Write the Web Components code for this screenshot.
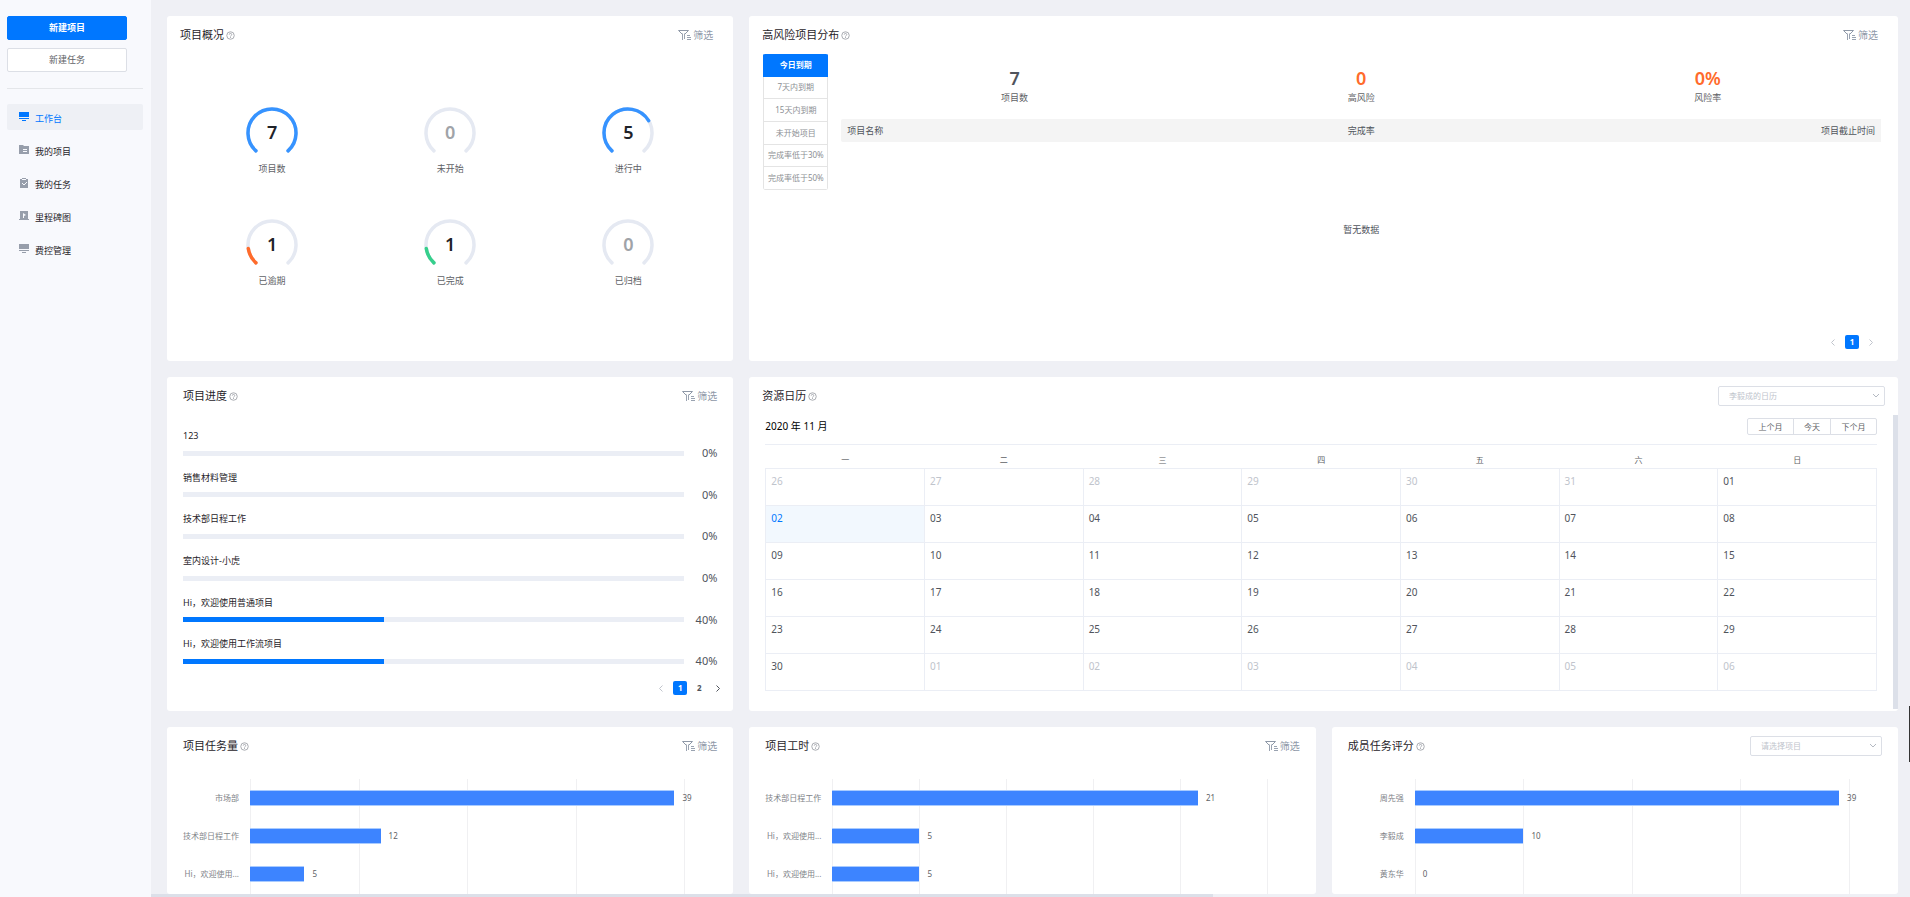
<!DOCTYPE html>
<html lang="zh-CN">
<head>
<meta charset="utf-8">
<title>工作台</title>
<style>
  body {
    margin: 0;
    display: flex;
    height: 100vh;
    overflow: hidden;
    background: #eff0f5;
    color: #1f2329;
    font-family: "Noto Sans", "Noto Sans CJK SC", sans-serif;
    font-size: 9px;
    line-height: 20px;
  }
  main {
    flex: 1;
    min-width: 0;
    display: flex;
    flex-direction: column;
  }
  .board {
    flex: 1;
    min-height: 0;
    overflow: hidden;
    display: grid;
    grid-template-columns: repeat(3, minmax(0, 1fr));
    grid-template-rows: minmax(345px, auto) minmax(334px, auto) 1fr;
    gap: 16px;
    padding: 16px 12px 0 16px;
  }
  .wide {
    grid-column: span 2;
  }
  .overview {
    --pad-left: 13px;
    --pad-right: 20px;
  }
  .risk {
    --pad-left: 13px;
    --pad-right: 20px;
  }
  .calendar {
    --pad-left: 13px;
    --pad-right: 13px;
  }
  .gauges {
    display: grid;
    grid-template-columns: repeat(3, 1fr);
    gap: 40px 0;
    padding: 53px 16px 0;
  }
  .hscroll {
    height: 3px;
  }
  .hscroll div {
    width: 60.4%;
    height: 100%;
    background: #dce0e9;
  }
  .edge-handle {
    position: fixed;
    right: 0;
    top: 706px;
    width: 1px;
    height: 56px;
    background: #333;
  }
</style>
</head>
<body>
  <dash-sidebar></dash-sidebar>
  <main>
    <div class="board">
      <dash-card class="overview" heading="项目概况">
        <filter-button slot="tools"></filter-button>
        <div class="gauges">
          <gauge-item value="7" total="7" label="项目数" color="#3693ff"></gauge-item>
          <gauge-item value="0" total="7" label="未开始" color="#3693ff"></gauge-item>
          <gauge-item value="5" total="7" label="进行中" color="#3693ff"></gauge-item>
          <gauge-item value="1" total="7" label="已逾期" color="#ff6b2b"></gauge-item>
          <gauge-item value="1" total="7" label="已完成" color="#36cf8c"></gauge-item>
          <gauge-item value="0" total="7" label="已归档" color="#3693ff"></gauge-item>
        </div>
      </dash-card>

      <dash-card class="wide risk" heading="高风险项目分布">
        <filter-button slot="tools"></filter-button>
        <risk-panel></risk-panel>
      </dash-card>

      <dash-card heading="项目进度">
        <filter-button slot="tools"></filter-button>
        <progress-list></progress-list>
      </dash-card>

      <dash-card class="wide calendar" heading="资源日历">
        <drop-down slot="tools" label="日历" width="167" text="李毅成的日历"></drop-down>
        <resource-calendar></resource-calendar>
      </dash-card>

      <dash-card heading="项目任务量">
        <filter-button slot="tools"></filter-button>
        <bar-chart max="40" lines="4" rows="市场部:39|技术部日程工作:12|Hi，欢迎使用...:5"></bar-chart>
      </dash-card>

      <dash-card heading="项目工时">
        <filter-button slot="tools"></filter-button>
        <bar-chart max="25" lines="5" rows="技术部日程工作:21|Hi，欢迎使用...:5|Hi，欢迎使用...:5"></bar-chart>
      </dash-card>

      <dash-card heading="成员任务评分">
        <drop-down slot="tools" label="项目" width="132" text="请选择项目"></drop-down>
        <bar-chart max="40" lines="4" rows="周先强:39|李毅成:10|黄东华:0"></bar-chart>
      </dash-card>
    </div>
    <div class="hscroll"><div></div></div>
  </main>
  <div class="edge-handle"></div>

<script>
const base = `
  * { box-sizing: border-box; }
  button, select { font: inherit; color: inherit; margin: 0; padding: 0; cursor: pointer; }
  svg { display: block; }
`;

class DashSidebar extends HTMLElement {
  connectedCallback() {
    this.attachShadow({ mode: "open" });
    const desk = `<path d="M0 0h10v5H0z"/><path d="M0 6h10v1H0zM3 8h4v1H3z"/>`;
    const items = [
      ["工作台", desk],
      ["我的项目", `<path fill-rule="evenodd" d="M0 0h4l1 1h5v8H0zM4 4v1h4V4zM4 6v1h4V6z"/>`],
      ["我的任务", `<path fill-rule="evenodd" d="M1 1h2V0h4v1h2v9H1zM3 1v1h4V1z"/><path d="M3 5l2 2 3-3" fill="none" stroke="#f8f9fd"/>`],
      ["里程碑图", `<path fill-rule="evenodd" d="M1 0h8v8h1v1H0V8h1zM4 2v5h1V5l2-1z"/>`],
      ["费控管理", desk],
    ];
    this.shadowRoot.innerHTML = `<style>${base}
      :host {
        display: block;
        flex: none;
        width: 151px;
        padding: 16px 8px 0 7px;
        box-sizing: border-box;
        background: #f8f9fd;
      }
      button {
        display: block;
        width: 120px;
        height: 24px;
        margin-bottom: 8px;
        border: 1px solid #dcdfe6;
        border-radius: 2px;
        background: #fff;
        color: #606266;
      }
      .primary {
        border-color: #0077ff;
        background: #0077ff;
        color: #fff;
        font-weight: bold;
      }
      hr {
        margin: 16px 0 15px;
        border: 0;
        border-top: 1px solid #e4e6ea;
      }
      nav {
        display: grid;
        gap: 7px;
      }
      a {
        display: flex;
        align-items: center;
        gap: 6px;
        height: 26px;
        padding: 3px 0 0 12px;
        border-radius: 2px;
        color: #1f2329;
        text-decoration: none;
      }
      a svg {
        margin-bottom: 4px;
        fill: #979eab;
      }
      a.active {
        background: #eef0f5;
        color: #0077ff;
      }
      a.active svg { fill: #0077ff; }
    </style>
    <button class="primary">新建项目</button>
    <button>新建任务</button>
    <hr>
    <nav>${items.map(([text, icon], i) => `
      <a href="#"${i === 0 ? ' class="active"' : ""}><svg width="10" height="10" viewBox="0 0 10 10">${icon}</svg>${text}</a>`).join("")}
    </nav>`;
  }
}

class DashCard extends HTMLElement {
  connectedCallback() {
    this.attachShadow({ mode: "open" });
    this.shadowRoot.innerHTML = `<style>${base}
      :host {
        display: flex;
        flex-direction: column;
        min-width: 0;
        border-radius: 3px;
        background: #fff;
        overflow: hidden;
      }
      header {
        display: flex;
        align-items: center;
        flex: none;
        height: 38px;
        gap: 2px;
        padding: 0 var(--pad-right, 16px) 0 var(--pad-left, 16px);
      }
      h2 {
        margin: 0;
        font-size: 11px;
        font-weight: normal;
      }
      .tools { margin-left: auto; }
    </style>
    <header>
      <h2>${this.getAttribute("heading")}</h2>
      <svg width="9" height="9" viewBox="0 0 18 18" fill="none" stroke="#a0a4aa" stroke-width="1.8">
        <circle cx="9" cy="9" r="7.5"/><path d="M6.5 7.2a2.500 2.500 0 1 1 3.700 2.200C9.300 9.900 9 10.300 9 11M9 12.200v1.800"/>
      </svg>
      <div class="tools"><slot name="tools"></slot></div>
    </header>
    <slot></slot>`;
  }
}

class FilterButton extends HTMLElement {
  connectedCallback() {
    this.attachShadow({ mode: "open" });
    this.shadowRoot.innerHTML = `<style>${base}
      :host { display: block; }
      button {
        display: flex;
        align-items: center;
        gap: 2px;
        border: 0;
        background: none;
        color: #8f99a8;
        font-size: 10px;
      }
    </style>
    <button>
      <svg width="13" height="12" viewBox="0 0 13 12" fill="none" stroke="#8f99a8">
        <path d="M.5 1.500h10L7 5M.5 1.500L4 5"/>
        <path d="M4.500 4.500V11M6.500 4.500V10" stroke-width=".9"/>
        <path d="M9 6.500h3M9 8.500h4M9 10.500h4" stroke-width=".9"/>
      </svg>筛选
    </button>`;
  }
}

class DropDown extends HTMLElement {
  connectedCallback() {
    this.attachShadow({ mode: "open" });
    this.shadowRoot.innerHTML = `<style>${base}
      :host { display: block; }
      div {
        display: grid;
        align-items: center;
        width: ${this.getAttribute("width")}px;
      }
      select, svg { grid-area: 1 / 1; }
      select {
        appearance: none;
        height: 20px;
        padding-left: 10px;
        border: 1px solid #dcdfe6;
        border-radius: 2px;
        background: #fff;
        color: #c0c4cc;
        font-size: 8px;
        line-height: 18px;
      }
      svg {
        justify-self: end;
        margin-right: 5px;
        pointer-events: none;
      }
    </style>
    <div>
      <select aria-label="${this.getAttribute("label")}"><option>${this.getAttribute("text")}</option></select>
      <svg width="8" height="6" viewBox="0 0 8 6" fill="none" stroke="#b4b9c2"><path d="M1 1l3 3 3-3"/></svg>
    </div>`;
  }
}

class GaugeItem extends HTMLElement {
  // point on the ring, angle measured clockwise from the bottom
  point(angle) {
    const a = (angle * Math.PI) / 180;
    return `${(26 - 24 * Math.sin(a)).toFixed(2)} ${(26 + 24 * Math.cos(a)).toFixed(2)}`;
  }

  arc(share) {
    const gap = 42;
    const sweep = (360 - gap * 2) * share;
    return `M${this.point(gap)}A24 24 0 ${sweep > 180 ? 1 : 0} 1 ${this.point(gap + sweep)}`;
  }

  connectedCallback() {
    this.attachShadow({ mode: "open" });
    const value = Number(this.getAttribute("value"));
    const share = value / Number(this.getAttribute("total"));
    this.shadowRoot.innerHTML = `<style>${base}
      :host {
        display: grid;
        justify-items: center;
        align-items: start;
      }
      svg, b { grid-area: 1 / 1; }
      b {
        font-size: 18px;
        font-weight: 600;
        line-height: 50px;
        color: ${value ? "#1f2329" : "#a0a3a8"};
      }
      span { color: #606266; }
    </style>
    <svg width="52" height="52" viewBox="0 0 52 52" fill="none" stroke-width="3.500" stroke-linecap="round">
      <path d="${this.arc(1)}" stroke="#e5e9f2"/>
      ${value ? `<path d="${this.arc(share)}" stroke="${this.getAttribute("color")}"/>` : ""}
    </svg>
    <b>${value}</b>
    <span>${this.getAttribute("label")}</span>`;
  }
}

class PageNav extends HTMLElement {
  connectedCallback() {
    this.attachShadow({ mode: "open" });
    const count = Number(this.getAttribute("pages"));
    const pages = Array.from({ length: count }, (_, i) => `<button${i === 0 ? ' class="on"' : ""}>${i + 1}</button>`);
    const arrow = (d) => `<svg width="4" height="7" viewBox="0 0 4 7" fill="none" stroke="currentColor"><path d="${d}"/></svg>`;
    this.shadowRoot.innerHTML = `<style>${base}
      :host {
        display: flex;
        justify-content: flex-end;
        gap: 5px;
      }
      button {
        display: grid;
        place-items: center;
        width: 14px;
        height: 14px;
        border: 0;
        border-radius: 2px;
        background: none;
        color: #50545c;
        font-size: 8px;
        font-weight: bold;
        line-height: 14px;
      }
      .on {
        background: #0077ff;
        color: #fff;
      }
      :disabled { color: #c0c4cc; }
    </style>
    <button disabled aria-label="上一页">${arrow("M3.500.5l-3 3 3 3")}</button>
    ${pages.join("")}
    <button${count === 1 ? " disabled" : ""} aria-label="下一页">${arrow("M.5.5l3 3-3 3")}</button>`;
  }
}

class RiskPanel extends HTMLElement {
  connectedCallback() {
    this.attachShadow({ mode: "open" });
    const tabs = ["今日到期", "7天内到期", "15天内到期", "未开始项目", "完成率低于30%", "完成率低于50%"];
    this.shadowRoot.innerHTML = `<style>${base}
      :host {
        display: flex;
        flex-direction: column;
        justify-content: space-between;
        flex: 1;
        padding: 0 17px 12px 14px;
      }
      .body {
        display: flex;
        align-items: flex-start;
        gap: 13px;
      }
      .tabs {
        display: grid;
        grid-auto-rows: 1fr;
        flex: none;
        width: 65px;
        height: 136px;
        border-radius: 2px;
        overflow: hidden;
      }
      .tabs button {
        border: 1px solid #e4e4e4;
        border-top: 0;
        background: #fff;
        color: #8c8f94;
        font-size: 8px;
        line-height: 20px;
        white-space: nowrap;
      }
      .tabs button:last-child { border-radius: 0 0 2px 2px; }
      .tabs .on {
        border-color: #0077ff;
        background: #0077ff;
        color: #fff;
        font-weight: bold;
      }
      .data { flex: 1; }
      dl {
        display: grid;
        grid-template-columns: repeat(3, 1fr);
        margin: 0;
        padding: 15px 0 11px;
        text-align: center;
      }
      dl div {
        display: flex;
        flex-direction: column-reverse;
        gap: 1px;
      }
      dt { color: #606266; }
      dd {
        margin: 0;
        color: #ff6b2b;
        font-size: 18px;
        font-weight: 600;
        line-height: 18px;
      }
      .total { color: #50545c; }
      table {
        width: 100%;
        table-layout: fixed;
        border-collapse: collapse;
        color: #50545c;
      }
      th {
        height: 23px;
        padding: 0 6px;
        background: #f4f4f4;
        font-weight: normal;
      }
      th:first-child { text-align: left; border-radius: 2px 0 0 2px; }
      th:last-child { text-align: right; }
      td {
        height: 176px;
        text-align: center;
      }
      page-nav { margin-right: 3px; }
    </style>
    <div class="body">
      <div class="tabs">${tabs.map((t, i) => `<button${i === 0 ? ' class="on"' : ""}>${t}</button>`).join("")}</div>
      <div class="data">
        <dl>
          <div><dt>项目数</dt><dd class="total">7</dd></div>
          <div><dt>高风险</dt><dd>0</dd></div>
          <div><dt>风险率</dt><dd>0%</dd></div>
        </dl>
        <table>
          <thead><tr><th>项目名称</th><th>完成率</th><th>项目截止时间</th></tr></thead>
          <tbody><tr><td colspan="3">暂无数据</td></tr></tbody>
        </table>
      </div>
    </div>
    <page-nav pages="1"></page-nav>`;
  }
}

class ProgressList extends HTMLElement {
  connectedCallback() {
    this.attachShadow({ mode: "open" });
    const rows = [
      ["123", 0],
      ["销售材料管理", 0],
      ["技术部日程工作", 0],
      ["室内设计-小虎", 0],
      ["Hi，欢迎使用普通项目", 40],
      ["Hi，欢迎使用工作流项目", 40],
    ];
    this.shadowRoot.innerHTML = `<style>${base}
      :host {
        display: block;
        padding: 11px 16px 0;
      }
      ul {
        display: grid;
        grid-auto-rows: 1fr;
        height: 250px;
        margin: 0;
        padding: 0;
        list-style: none;
      }
      .line {
        display: flex;
        align-items: center;
        line-height: 14px;
      }
      .track {
        flex: 1;
        height: 5px;
        background: #ebeef5;
      }
      .track div {
        height: 100%;
        background: #0077ff;
      }
      .line span {
        width: 33px;
        color: #50545c;
        font-size: 11px;
        text-align: right;
      }
      page-nav { margin: 5px -8px 0 0; }
    </style>
    <ul>${rows.map(([name, p]) => `
      <li>${name}<div class="line"><div class="track"><div style="width:${p}%"></div></div><span>${p}%</span></div></li>`).join("")}
    </ul>
    <page-nav pages="2"></page-nav>`;
  }
}

class ResourceCalendar extends HTMLElement {
  connectedCallback() {
    this.attachShadow({ mode: "open" });
    // the grid opens on Monday 26 October 2020
    const weeks = [];
    for (let w = 0; w < 6; w++) {
      let cells = "";
      for (let d = 0; d < 7; d++) {
        const date = new Date(2020, 9, 26 + w * 7 + d);
        const day = String(date.getDate()).padStart(2, "0");
        const out = date.getMonth() !== 10;
        const cls = out ? "out" : day === "02" ? "today" : "";
        cells += `<td class="${cls}">${day}</td>`;
      }
      weeks.push(`<tr>${cells}</tr>`);
    }
    this.shadowRoot.innerHTML = `<style>${base}
      :host {
        display: flex;
        flex: 1;
        justify-content: space-between;
        padding-bottom: 2px;
      }
      .month {
        flex: 1;
        padding: 3px 16px 0;
      }
      .bar {
        display: flex;
        justify-content: space-between;
        align-items: center;
        padding-bottom: 9px;
        border-bottom: 1px solid #ebeef5;
        color: #000;
        line-height: 17px;
      }
      .bar div { display: flex; }
      .bar span { font-size: 10px; }
      button {
        height: 17px;
        padding: 0 10px;
        border: 1px solid #dcdfe6;
        background: #fff;
        color: #606266;
        font-size: 8px;
        line-height: 15px;
      }
      button + button { margin-left: -1px; }
      button:first-child { border-radius: 2px 0 0 2px; width: 47px; }
      button:last-child { border-radius: 0 2px 2px 0; width: 47px; }
      table {
        width: 100%;
        table-layout: fixed;
        border-collapse: collapse;
      }
      th {
        height: 23px;
        padding: 7px 0 0;
        color: #606266;
        font-size: 8px;
        font-weight: normal;
        line-height: 16px;
      }
      td {
        height: 37px;
        padding: 6px 5px;
        border: 1px solid #ebeef5;
        color: #50545c;
        font-size: 10px;
        line-height: 12px;
        vertical-align: top;
      }
      .out { color: #c0c4cc; }
      .today {
        background: #f2f8fe;
        color: #0077ff;
      }
      .scroll {
        width: 5px;
        background: #dce0e9;
      }
    </style>
    <div class="month">
      <div class="bar">
        <span>2020 年 11 月</span>
        <div><button>上个月</button><button>今天</button><button>下个月</button></div>
      </div>
      <table>
        <thead><tr>${[..."一二三四五六日"].map((d) => `<th>${d}</th>`).join("")}</tr></thead>
        <tbody>${weeks.join("")}</tbody>
      </table>
    </div>
    <div class="scroll"></div>`;
  }
}

class BarChart extends HTMLElement {
  connectedCallback() {
    this.attachShadow({ mode: "open" });
    const max = Number(this.getAttribute("max"));
    const rows = this.getAttribute("rows").split("|").map((r) => r.split(":"));
    this.shadowRoot.innerHTML = `<style>${base}
      :host {
        display: grid;
        grid-template-columns: 72px 1fr;
        flex: 1;
        gap: 11px;
        padding: 14px 48px 0 0;
        color: #808388;
        font-size: 8px;
        line-height: 38px;
      }
      .names { text-align: right; white-space: nowrap; }
      .plot { display: grid; }
      .lines, .bars { grid-area: 1 / 1; min-width: 0; }
      .lines {
        display: grid;
        grid-auto-flow: column;
        grid-auto-columns: 1fr;
        border-right: 1px solid #f0f0f2;
      }
      .lines i { border-left: 1px solid #f0f0f2; }
      .bars > div {
        display: flex;
        align-items: center;
        gap: 8px;
        height: 38px;
        color: #606266;
      }
      .bars i {
        flex: none;
        height: 16px;
        background: #3d84ff;
        border: solid #a9cbff;
        border-width: 1px 0;
      }
    </style>
    <div class="names">${rows.map(([name]) => `<div>${name}</div>`).join("")}</div>
    <div class="plot">
      <div class="lines">${"<i></i>".repeat(Number(this.getAttribute("lines")))}</div>
      <div class="bars">${rows.map(([, v]) => `<div><i style="width:${(v / max) * 100}%"></i>${v}</div>`).join("")}</div>
    </div>`;
  }
}

customElements.define("dash-sidebar", DashSidebar);
customElements.define("dash-card", DashCard);
customElements.define("filter-button", FilterButton);
customElements.define("drop-down", DropDown);
customElements.define("gauge-item", GaugeItem);
customElements.define("page-nav", PageNav);
customElements.define("risk-panel", RiskPanel);
customElements.define("progress-list", ProgressList);
customElements.define("resource-calendar", ResourceCalendar);
customElements.define("bar-chart", BarChart);
</script>
</body>
</html>
